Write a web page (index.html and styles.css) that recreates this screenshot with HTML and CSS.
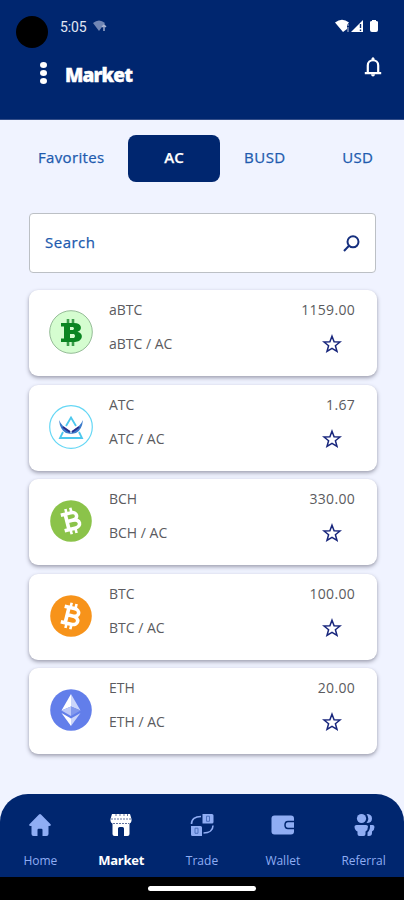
FILE: index.html
```html
<!DOCTYPE html>
<html lang="en">
<head>
<meta charset="utf-8">
<title>Market</title>
<link rel="stylesheet" href="styles.css">
</head>
<body>
<svg class="defs" width="0" height="0">
  <symbol id="star" viewBox="0 0 20 20"><path d="M10 2.2 12.1 7.7 18 8 13.4 11.7 15 17.4 10 14.3 5 17.4 6.6 11.7 2 8 7.9 7.7Z" fill="none" stroke="#18267c" stroke-width="1.5"/></symbol>
  <symbol id="coin-b" viewBox="0 0 42 42"><g fill="none" stroke="#fff" stroke-width="3.6"><path d="M12.5 13H22.5C29.5 13 29.5 20.7 22.5 20.7H17.5M22.5 20.7C31 20.7 30.5 29 23 29H12.5M17 12.5V29.5"/><path stroke-width="2.6" d="M18.5 8V14M23.5 8V14M18.5 28V34M23.5 28V34"/></g></symbol>
</svg>
<header class="header">
  <div class="status">
    <span class="camera"></span>
    <span class="time">5:05</span>
    <svg class="wifi-dim" width="15" height="13" viewBox="0 0 15 13"><path d="M0 3Q6-2 12 3L6 11Z" fill="#7186b4"/><path d="M11 11V5M9 7 11 5 13 7" stroke="#a9b4d2" stroke-width="1.4" fill="none"/></svg>
    <svg class="signals" width="46" height="15" viewBox="0 0 46 15"><path d="M0 3.5Q7-2 14 3.5L12 6V10L8 13Z" fill="#fff"/><path d="M13 5V7M13 8V13" stroke="#b8c1dc"/><path d="M16 13 28 1V13Z" fill="#fff"/><path d="M25.5 5V9M25.5 10.5V12" stroke="#00266f" stroke-width="1.4"/><path d="M35 3Q35 2 37 2V1H41V2Q43 2 43 3V11Q43 13 41 13H37Q35 13 35 11Z" fill="#fff"/></svg>
  </div>
  <div class="titlebar">
    <span class="dots"><i></i><i></i><i></i></span>
    <h1>Market</h1>
    <svg class="bell" width="18" height="20" viewBox="0 0 18 20"><path d="M3.8 16V8.5C3.8 1.5 14.2 1.5 14.2 8.5V16M.8 16.2H17.2" fill="none" stroke="#fff" stroke-width="2.2"/><path d="M7.5 1.5Q9-.8 10.5 1.5V4H7.5ZM7 17.3H11Q10.8 19.5 9 19.5T7 17.3Z" fill="#fff"/></svg>
  </div>
</header>
<main>
  <nav class="tabs"><span class="fav">Favorites</span><span class="active">AC</span><span class="busd">BUSD</span><span class="usd">USD</span></nav>
  <div class="search"><span>Search</span><svg width="17" height="17" viewBox="0 0 17 17"><circle cx="10" cy="6.8" r="5.5"/><path d="M6 10.8 1 16"/></svg></div>
  <section class="list">
    <article class="card">
      <svg class="coin" width="44" height="44" viewBox="0 0 44 44"><circle cx="22" cy="22" r="21.3" fill="#d5fdd0" stroke="#94bb96"/><path d="M12 13H25C33 13 34 20 28.5 21.8 36 24 33 32 26 32H12V28.5H15V16.5H12ZM21 17V20H24Q26 18.5 24 17ZM21 24V28H25Q27 26 25 24Z" fill="#0b8522" fill-rule="evenodd"/><path d="M19 9V13M24 9V13M19 32V36M24 32V36" stroke="#3a9c49" stroke-width="2.6"/></svg>
      <div class="pair"><span>aBTC</span><span>aBTC / AC</span></div><div class="quote"><span>1159.00</span><svg class="star" width="20" height="20"><use href="#star"/></svg></div>
    </article>
    <article class="card">
      <svg class="coin" width="44" height="44" viewBox="0 0 44 44"><circle cx="22" cy="22" r="21.3" fill="#fff" stroke="#65d7f5" stroke-width="1.2"/><path d="M17 21 22 12.5 27 21M14 27 11 33H33L30 27" fill="none" stroke="#4cc8ee" stroke-width="1.8"/><path d="M10 15Q13 22 21 26L22 29 17 28Q11 25 10 15ZM34 15Q31 22 23 26L22 29 27 28Q33 25 34 15Z" fill="#3b7bcb"/><path d="M14 22 21 27M30 22 23 27" fill="none" stroke="#29308e" stroke-width="2"/></svg>
      <div class="pair"><span>ATC</span><span>ATC / AC</span></div><div class="quote"><span>1.67</span><svg class="star" width="20" height="20"><use href="#star"/></svg></div>
    </article>
    <article class="card">
      <svg class="coin" width="44" height="44" viewBox="0 0 44 44"><circle cx="22" cy="22" r="20.8" fill="#8bc34a"/><use href="#coin-b" x="1" y="1" width="42" height="42" transform="rotate(-14 22 22)"/></svg>
      <div class="pair"><span>BCH</span><span>BCH / AC</span></div><div class="quote"><span>330.00</span><svg class="star" width="20" height="20"><use href="#star"/></svg></div>
    </article>
    <article class="card">
      <svg class="coin" width="44" height="44" viewBox="0 0 44 44"><circle cx="22" cy="22" r="20.8" fill="#f7931a"/><use href="#coin-b" x="1" y="1" width="42" height="42" transform="rotate(14 22 22)"/></svg>
      <div class="pair"><span>BTC</span><span>BTC / AC</span></div><div class="quote"><span>100.00</span><svg class="star" width="20" height="20"><use href="#star"/></svg></div>
    </article>
    <article class="card">
      <svg class="coin" width="44" height="44" viewBox="0 0 44 44"><circle cx="22" cy="22" r="20.8" fill="#627eea"/><path d="M22 6V18.5L12.5 22.5Z" fill="#fff"/><path d="M22 6 31.5 22.5 22 18.5Z" fill="#cbd5fa"/><path d="M12.5 22.5 22 18.5V28Z" fill="#bdc9f8"/><path d="M22 18.5 31.5 22.5 22 28Z" fill="#8399ed"/><path d="M12.5 25 22 30.5V38Z" fill="#fff"/><path d="M31.5 25 22 30.5V38Z" fill="#cbd5fa"/></svg>
      <div class="pair"><span>ETH</span><span>ETH / AC</span></div><div class="quote"><span>20.00</span><svg class="star" width="20" height="20"><use href="#star"/></svg></div>
    </article>
  </section>
</main>
<footer>
  <nav class="bottom">
    <div class="item"><svg width="24" height="24" viewBox="0 0 24 24"><path d="M1.2 11.6 11 1.4Q12 .4 13 1.4L22.8 11.6Q23.3 13 21.5 13H20.5V21Q20.5 23 18.5 23H14.5V17Q14.5 15.8 13.5 15.8H10.5Q9.5 15.8 9.5 17V23H5.5Q3.5 23 3.5 21V13H2.2Q.7 13 1.2 11.6Z"/></svg><span>Home</span></div>
    <div class="item on"><svg width="24" height="24" viewBox="0 0 24 24"><path d="M3 1H21L22.5 6V8Q22 10 20.5 10.5V21Q20.5 23 18.5 23H15V15.5Q15 14 13.5 14H10.5Q9 14 9 15.5V23H5.5Q3.5 23 3.5 21V10.5Q2 10 1.5 8V6Z"/><path d="M7 1V4M11 1V4M15 1V4M18.5 1V4M2 6H22M4 10.5H20" stroke="#61739f" fill="none" stroke-dasharray="2 1"/></svg><span>Market</span></div>
    <div class="item"><svg width="24" height="24" viewBox="0 0 24 24"><path d="M12.5 1H22Q23.5 1 23.5 2.5V9Q23.5 10.5 22 10.5H12.5ZM1 13H10.5Q12 13 12 14.5V23H2.5Q1 23 1 21.5Z"/><path d="M1.5 11C1.5 6 5 3.5 11 3.5M23 12.5C23 17 19.5 20 13.5 20" stroke="#8fadf4" stroke-width="1.6" fill="none"/><path d="M16.5 3.2H19.5V8.3H16.5ZM5 15.2H8V20.3H5Z" stroke="#4b70be" stroke-width="1" fill="none"/></svg><span>Trade</span></div>
    <div class="item"><svg width="24" height="24" viewBox="0 0 24 24"><rect x=".5" y="2.5" width="22.5" height="19" rx="3"/><path d="M24 8.5H17Q14 8.5 14 12T17 15.5H24" fill="none" stroke="#00266f" stroke-width="1.5"/><path d="M16.5 12Q16.5 10.3 18 10.3H23V13.7H18Q16.5 13.7 16.5 12Z"/></svg><span>Wallet</span></div>
    <div class="item"><svg width="24" height="24" viewBox="0 0 24 24"><circle cx="9.5" cy="5.5" r="4.6"/><path d="M2.5 13.5Q2.5 12 4.5 12H14Q16 12 16 13.5 16 17 13.5 18.5V21Q13.5 23 11.5 23H7.5Q5.5 23 5.5 21V18.5Q2.5 17 2.5 13.5ZM14.5 1Q20 1 20 5.5T14.5 10Q18 5.5 14.5 1ZM18 12H20.5Q22.5 12 22.5 14 22.5 17 20 18.5V20Q20 23 17 23H15.5V19.5Q18.5 17 18 12Z"/></svg><span>Referral</span></div>
  </nav>
  <div class="system"><span></span></div>
</footer>
</body>
</html>
```
FILE: styles.css
```css
* { box-sizing: border-box; }
body { width: 404px; height: 900px; margin: 0; overflow: hidden; background: #f0f3ff; font-family: "Open Sans", sans-serif; display: flex; flex-direction: column; }
.defs { position: absolute; }
svg { display: block; flex: none; }
.header { height: 120px; flex: none; background: #00266f; color: #fff; border-bottom: 1px solid #344e89; }
.status { height: 52px; padding: 0 23px 0 16px; display: flex; align-items: flex-start; }
.camera { width: 32px; height: 32px; border-radius: 50%; background: #000; margin-top: 16px; }
.time { width: 27px; margin: 17px 6px 0 12px; font: 400 14px/20px Roboto, sans-serif; white-space: nowrap; color: #e2e6f3; letter-spacing: -.1px; }
.wifi-dim { margin-top: 20px; }
.signals { margin: 19px 0 0 auto; }
.titlebar { display: flex; padding: 0 22px 0 40px; align-items: flex-start; }
.dots { width: 7px; display: grid; gap: 2px; margin: 10px 18px 0 0; }
.dots i { width: 7px; height: 6px; border-radius: 50%; background: #fff; }
h1 { font-size: 19px; line-height: 26px; font-weight: 800; margin: 10px 0 0; letter-spacing: -.85px; -webkit-text-stroke: .4px #fff; }
.bell { margin: 5px 0 0 auto; }
main { flex: 1; min-height: 0; }
.tabs { display: flex; align-items: center; height: 48px; margin: 14px 31px 0 38px; color: #205aae; font-size: 15px; white-space: nowrap; }
.tabs span { -webkit-text-stroke: .25px; }
.fav, .busd, .usd { padding-bottom: 3px; }
.fav { width: 67px; margin-right: 23px; letter-spacing: .35px; }
.active { width: 92px; height: 47px; line-height: 44px; border-radius: 8px; background: #00266f; color: #fff; text-align: center; font-weight: 600; }
.busd { width: 44px; margin-left: 24px; letter-spacing: .5px; }
.usd { margin-left: auto; letter-spacing: .2px; }
.search { width: 347px; height: 60px; margin: 31px 0 0 29px; border: 1px solid #bcc0c5; border-radius: 4px; background: #fff; padding: 0 15px; display: flex; justify-content: space-between; align-items: center; color: #205aae; font-size: 15px; }
.search span { padding-bottom: 2px; letter-spacing: .5px; -webkit-text-stroke: .25px; }
.search svg { fill: none; stroke: #152f7e; stroke-width: 2; }
.list { display: grid; gap: 8.6px; padding: 17px 27px 0 29px; }
.card { height: 86px; border-radius: 9px; background: #fff; display: flex; padding: 0 22px 0 20px; box-shadow: 0 2px 4px #a4a6b6, 0 1px 2px #d0d1de; color: #5b5b60; }
.coin { margin: 20px 16px 0 0; }
.pair { display: flex; flex-direction: column; gap: 14px; padding-top: 10px; font-size: 14px; line-height: 20px; }
.quote { margin-left: auto; display: flex; flex-direction: column; align-items: flex-end; padding-top: 10px; font-size: 14px; line-height: 20px; letter-spacing: .3px; }
.star { margin: 14px 13px 0 0; }
footer { height: 106px; flex: none; background: #f0f3ff; }
.bottom { height: 83px; border-radius: 28px 28px 0 0; background: #00266f; display: grid; grid-template-columns: repeat(5, 1fr); }
.item { color: #8fadf4; fill: #8fadf4; display: flex; flex-direction: column; align-items: center; padding-top: 19px; font-size: 12px; }
.item span { line-height: 18px; margin-top: 15px; white-space: nowrap; }
.item.on { color: #fff; fill: #fff; font-size: 13px; font-weight: 700; }
.item.on span { margin-top: 14px; letter-spacing: -.25px; }
.system { height: 23px; background: #000; display: flex; justify-content: center; padding-top: 9px; }
.system span { width: 108px; height: 5px; background: #fff; border-radius: 3px; }
```
